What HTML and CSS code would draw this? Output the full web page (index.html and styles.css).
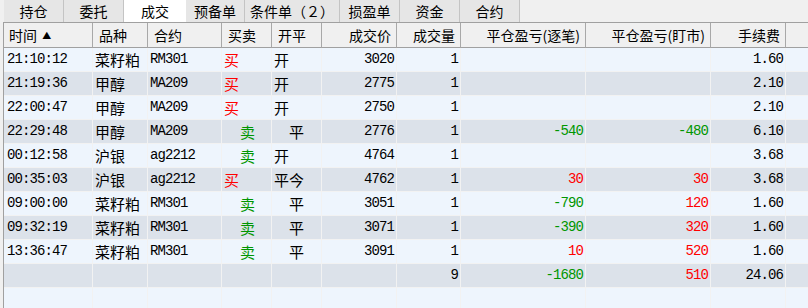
FILE: index.html
```html
<!DOCTYPE html>
<html lang="zh-CN">

<head>
    <meta charset="UTF-8">
    <title>成交</title>
    <link rel="stylesheet" href="styles.css">
</head>

<body>
    <div class="tabs">
        <div class="tab">持仓</div>
        <div class="tab">委托</div>
        <div class="tab active">成交</div>
        <div class="tab">预备单</div>
        <div class="tab wide">条件单（2）</div>
        <div class="tab">损盈单</div>
        <div class="tab">资金</div>
        <div class="tab">合约</div>
    </div>

    <div class="grid">
        <div class="row head">
            <div class="c">时间 <span class="arrow">▲</span></div>
            <div class="c">品种</div>
            <div class="c">合约</div>
            <div class="c">买卖</div>
            <div class="c">开平</div>
            <div class="c r">成交价</div>
            <div class="c r">成交量</div>
            <div class="c r">平仓盈亏(逐笔)</div>
            <div class="c r">平仓盈亏(盯市)</div>
            <div class="c r">手续费</div>
            <div class="c last"></div>
        </div>

        <div class="row">
            <div class="c num">21:10:12</div><div class="c cn">菜籽粕</div><div class="c num">RM301</div>
            <div class="c cn buy">买</div><div class="c cn">开</div>
            <div class="c num r">3020</div><div class="c num r">1</div><div class="c num r"></div><div class="c num r"></div><div class="c num r">1.60</div><div class="c last"></div>
        </div>
        <div class="row alt">
            <div class="c num">21:19:36</div><div class="c cn">甲醇</div><div class="c num">MA209</div>
            <div class="c cn buy">买</div><div class="c cn">开</div>
            <div class="c num r">2775</div><div class="c num r">1</div><div class="c num r"></div><div class="c num r"></div><div class="c num r">2.10</div><div class="c last"></div>
        </div>
        <div class="row">
            <div class="c num">22:00:47</div><div class="c cn">甲醇</div><div class="c num">MA209</div>
            <div class="c cn buy">买</div><div class="c cn">开</div>
            <div class="c num r">2750</div><div class="c num r">1</div><div class="c num r"></div><div class="c num r"></div><div class="c num r">2.10</div><div class="c last"></div>
        </div>
        <div class="row alt">
            <div class="c num">22:29:48</div><div class="c cn">甲醇</div><div class="c num">MA209</div>
            <div class="c cn sell">卖</div><div class="c cn ind">平</div>
            <div class="c num r">2776</div><div class="c num r">1</div><div class="c num r green">-540</div><div class="c num r green">-480</div><div class="c num r">6.10</div><div class="c last"></div>
        </div>
        <div class="row">
            <div class="c num">00:12:58</div><div class="c cn">沪银</div><div class="c num">ag2212</div>
            <div class="c cn sell">卖</div><div class="c cn">开</div>
            <div class="c num r">4764</div><div class="c num r">1</div><div class="c num r"></div><div class="c num r"></div><div class="c num r">3.68</div><div class="c last"></div>
        </div>
        <div class="row alt">
            <div class="c num">00:35:03</div><div class="c cn">沪银</div><div class="c num">ag2212</div>
            <div class="c cn buy">买</div><div class="c cn">平今</div>
            <div class="c num r">4762</div><div class="c num r">1</div><div class="c num r red">30</div><div class="c num r red">30</div><div class="c num r">3.68</div><div class="c last"></div>
        </div>
        <div class="row">
            <div class="c num">09:00:00</div><div class="c cn">菜籽粕</div><div class="c num">RM301</div>
            <div class="c cn sell">卖</div><div class="c cn ind">平</div>
            <div class="c num r">3051</div><div class="c num r">1</div><div class="c num r green">-790</div><div class="c num r red">120</div><div class="c num r">1.60</div><div class="c last"></div>
        </div>
        <div class="row alt">
            <div class="c num">09:32:19</div><div class="c cn">菜籽粕</div><div class="c num">RM301</div>
            <div class="c cn sell">卖</div><div class="c cn ind">平</div>
            <div class="c num r">3071</div><div class="c num r">1</div><div class="c num r green">-390</div><div class="c num r red">320</div><div class="c num r">1.60</div><div class="c last"></div>
        </div>
        <div class="row">
            <div class="c num">13:36:47</div><div class="c cn">菜籽粕</div><div class="c num">RM301</div>
            <div class="c cn sell">卖</div><div class="c cn ind">平</div>
            <div class="c num r">3091</div><div class="c num r">1</div><div class="c num r red">10</div><div class="c num r red">520</div><div class="c num r">1.60</div><div class="c last"></div>
        </div>

        <!-- totals -->
        <div class="row alt">
            <div class="c"></div><div class="c"></div><div class="c"></div><div class="c"></div><div class="c"></div>
            <div class="c num r"></div><div class="c num r">9</div><div class="c num r green">-1680</div><div class="c num r red">510</div><div class="c num r">24.06</div><div class="c last"></div>
        </div>
        <div class="row">
            <div class="c"></div><div class="c"></div><div class="c"></div><div class="c"></div><div class="c"></div>
            <div class="c"></div><div class="c"></div><div class="c"></div><div class="c"></div><div class="c"></div><div class="c last"></div>
        </div>
    </div>
</body>

</html>
```

FILE: styles.css
```css
* {
    box-sizing: border-box;
}

body {
    margin: 0;
    background-color: #f0f0f0;
    font-family: "Noto Sans CJK SC", sans-serif;
    color: #000;
    overflow: hidden;
}

/* tab strip */
.tabs {
    display: flex;
    height: 22px;
    padding-left: 4px;
    background-color: #f0f0f0;
}

.tab {
    width: 60px;
    height: 22px;
    line-height: 22px;
    text-align: center;
    font-size: 14px;
    background-color: #e6e6e6;
    border-right: 1px solid #c4c4c4;
}

.tab.active {
    width: 62px;
    background-color: #fff;
    border-right: none;
}

.tab:nth-child(4) {
    width: 59px;
}

.tab.wide {
    width: 95px;
    font-feature-settings: "fwid";
}

/* trade grid */
.grid {
    margin-left: 3px;
    border-left: 1px solid #a0a0a0;
    border-top: 1px solid #a0a0a0;
    background-color: #eef5fd;
    height: 286px;
}

.row {
    display: grid;
    grid-template-columns: 89px 55px 74px 50px 50px 75px 64px 125px 125px 75px 1fr;
    height: 24px;
    background-color: #eef5fd;
}

.row.alt {
    background-color: #dce2ea;
}

.c {
    height: 24px;
    line-height: 23px;
    padding: 0 2px;
    border-right: 1px solid #f2f2f2;
    border-bottom: 1px solid #f2f2f2;
    white-space: nowrap;
    overflow: hidden;
}

.c.last {
    border-right: none;
}

.head {
    height: 25px;
    background-color: #f0f0f0;
}

.head .c {
    height: 25px;
    line-height: 24px;
    font-size: 14px;
    padding: 0 6px;
    border-right: 1px solid #a8a8a8;
    border-bottom: 1px solid #a0a0a0;
}

.head .c.last {
    border-right: none;
}

.head .c:first-child {
    padding-left: 5px;
}

.arrow {
    font-size: 9px;
    vertical-align: 2px;
    margin-left: 2px;
}

.r {
    text-align: right;
}

.head .c.r {
    padding-right: 5px;
}

.num {
    font-family: "Liberation Mono", monospace;
    font-size: 14px;
    letter-spacing: -0.9px;
}

.num.r {
    padding-right: 2px;
}

.cn {
    font-size: 15px;
}

.row .c:first-child.num {
    padding-left: 3px;
}

.buy {
    color: #f00;
}

.sell {
    color: #009600;
    padding-left: 18px;
}

.ind {
    padding-left: 17px;
}

.red {
    color: #f00;
}

.green {
    color: #009600;
}
```
